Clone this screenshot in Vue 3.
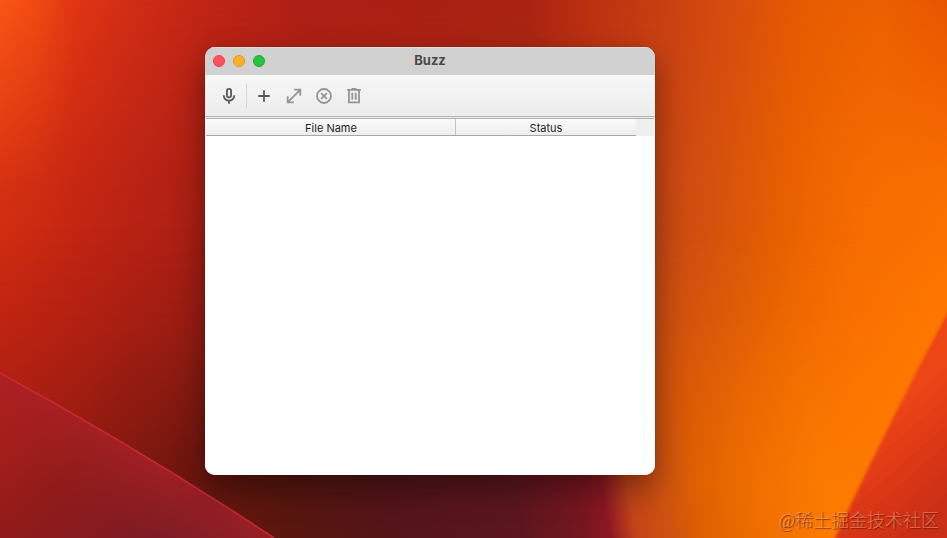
<script setup>
import { ref } from 'vue'

const columns = ref(['File Name', 'Status'])

const windowControls = [
  { name: 'close', label: 'Close' },
  { name: 'minimize', label: 'Minimize' },
  { name: 'zoom', label: 'Zoom' }
]
</script>

<template>
  <main class="desktop">
    <svg class="wallpaper" viewBox="0 0 947 538" preserveAspectRatio="none" aria-hidden="true">
      <defs>
        <linearGradient id="top-band" gradientUnits="userSpaceOnUse" x1="0" y1="0" x2="947" y2="0">
          <stop offset="0" stop-color="#fa5616" />
          <stop offset="0.04" stop-color="#f04a13" />
          <stop offset="0.08" stop-color="#df3513" />
          <stop offset="0.14" stop-color="#d02d15" />
          <stop offset="0.22" stop-color="#bf2414" />
          <stop offset="0.32" stop-color="#ad1f15" />
          <stop offset="0.45" stop-color="#a82013" />
          <stop offset="0.56" stop-color="#a92312" />
          <stop offset="0.62" stop-color="#bb3010" />
          <stop offset="0.7" stop-color="#c73f12" />
          <stop offset="0.78" stop-color="#d84e0d" />
          <stop offset="0.85" stop-color="#e65b00" />
          <stop offset="0.93" stop-color="#eb6000" />
          <stop offset="1" stop-color="#e75500" />
        </linearGradient>
        <linearGradient id="middle-band">
          <stop offset="0" stop-color="#cb2711" />
          <stop offset="0.08" stop-color="#bf2312" />
          <stop offset="0.15" stop-color="#b22014" />
          <stop offset="0.22" stop-color="#a61e14" />
          <stop offset="0.6" stop-color="#b43414" />
          <stop offset="0.7" stop-color="#cb4a15" />
          <stop offset="0.77" stop-color="#d9570b" />
          <stop offset="0.83" stop-color="#e96300" />
          <stop offset="0.9" stop-color="#f86e00" />
          <stop offset="1" stop-color="#ff7700" />
        </linearGradient>
        <linearGradient id="bottom-band" gradientUnits="userSpaceOnUse" x1="0" y1="538" x2="921" y2="385">
          <stop offset="0" stop-color="#a01b12" />
          <stop offset="0.1" stop-color="#8c1911" />
          <stop offset="0.2" stop-color="#6d160e" />
          <stop offset="0.31" stop-color="#58160e" />
          <stop offset="0.42" stop-color="#541419" />
          <stop offset="0.55" stop-color="#5c161e" />
          <stop offset="0.62" stop-color="#77161f" />
          <stop offset="0.645" stop-color="#8d1722" />
          <stop offset="0.672" stop-color="#c24319" />
          <stop offset="0.71" stop-color="#cf5310" />
          <stop offset="0.75" stop-color="#e06200" />
          <stop offset="0.81" stop-color="#f07000" />
          <stop offset="0.88" stop-color="#fb7a00" />
          <stop offset="1" stop-color="#ff7c00" />
        </linearGradient>
        <linearGradient id="fade-top" x2="0" y2="1">
          <stop offset="0" stop-color="#fff" />
          <stop offset="0.15" stop-color="#fff" stop-opacity="0.68" />
          <stop offset="0.35" stop-color="#fff" stop-opacity="0.22" />
          <stop offset="0.6" stop-color="#fff" stop-opacity="0" />
        </linearGradient>
        <linearGradient id="fade-bottom" x2="0" y2="1">
          <stop offset="0.42" stop-color="#fff" stop-opacity="0" />
          <stop offset="0.6" stop-color="#fff" stop-opacity="0.22" />
          <stop offset="0.8" stop-color="#fff" stop-opacity="0.75" />
          <stop offset="0.9" stop-color="#fff" />
        </linearGradient>
        <mask id="mask-top"><rect width="947" height="538" fill="url(#fade-top)" /></mask>
        <mask id="mask-bottom"><rect width="947" height="538" fill="url(#fade-bottom)" /></mask>
        <linearGradient id="left-fold" gradientUnits="userSpaceOnUse" x1="0" y1="380" x2="150" y2="550">
          <stop offset="0" stop-color="#b5201b" />
          <stop offset="0.5" stop-color="#921b19" />
          <stop offset="1" stop-color="#7c1b26" />
        </linearGradient>
        <linearGradient id="left-fold-light" gradientUnits="userSpaceOnUse" x1="130" y1="450" x2="95" y2="510">
          <stop offset="0" stop-color="#a82026" stop-opacity="0.7" />
          <stop offset="1" stop-color="#99201f" stop-opacity="0" />
        </linearGradient>
        <linearGradient id="right-fold" gradientUnits="userSpaceOnUse" x1="880" y1="420" x2="950" y2="500">
          <stop offset="0" stop-color="#ec4513" />
          <stop offset="0.5" stop-color="#dc3818" />
          <stop offset="1" stop-color="#c92e18" />
        </linearGradient>
        <filter id="soft"><feGaussianBlur stdDeviation="1.5" /></filter>
      </defs>
      <rect width="947" height="538" fill="url(#middle-band)" />
      <rect width="947" height="538" fill="url(#top-band)" mask="url(#mask-top)" />
      <rect width="947" height="538" fill="url(#bottom-band)" mask="url(#mask-bottom)" />
      <path d="M0 373Q145 452 274 538H0z" fill="url(#left-fold)" />
      <path d="M0 373Q145 452 274 538H0z" fill="url(#left-fold-light)" />
      <path d="M0 373Q145 452 274 538" fill="none" stroke="#cf2c35" stroke-width="1.8" opacity="0.8" />
      <path d="M960 290L947 314Q886 428 835 538L830 550H960z" fill="url(#right-fold)" filter="url(#soft)" />
    </svg>

    <section class="window" aria-labelledby="window-title">
      <header class="titlebar">
        <div class="controls">
          <button
            v-for="control in windowControls"
            :key="control.name"
            type="button"
            class="control"
            :class="control.name"
            :aria-label="control.label"
          ></button>
        </div>
        <h1 id="window-title" class="title">Buzz</h1>
      </header>

      <div class="toolbar" role="toolbar" aria-label="Transcription tools">
        <button type="button" class="tool" aria-label="Record">
          <svg class="icon" viewBox="0 0 20 20">
            <rect x="7.7" y="2" width="4.6" height="9.6" rx="2.3" />
            <path d="M4.2 9.3v.5a5.8 5.4 0 0 0 11.6 0v-.5M10 15.2v3.4" />
          </svg>
        </button>
        <span class="separator"></span>
        <button type="button" class="tool" aria-label="New transcription">
          <svg class="icon" viewBox="0 0 20 20"><path d="M10 3.6v12.8M3.6 10h12.8" /></svg>
        </button>
        <button type="button" class="tool" aria-label="Open transcript" disabled>
          <svg class="icon" viewBox="0 0 20 20">
            <path d="M3.4 16.6L16.6 3.4M10.2 3h6.8v6.8M3 10.2v6.8h6.8" />
          </svg>
        </button>
        <button type="button" class="tool" aria-label="Cancel transcription" disabled>
          <svg class="icon" viewBox="0 0 20 20">
            <circle cx="10" cy="10" r="7.8" />
            <path d="M6.8 6.8l6.4 6.4M13.2 6.8l-6.4 6.4" />
          </svg>
        </button>
        <button type="button" class="tool" aria-label="Clear history" disabled>
          <svg class="icon" viewBox="0 0 20 20">
            <path d="M2.4 3.3h15.2M7.3 2.2h5.4M4.4 3.6v13.4h11.2V3.6M8.1 6.3v8M11.9 6.3v8" />
          </svg>
        </button>
      </div>

      <div class="content">
        <table class="tasks">
          <thead>
            <tr>
              <th v-for="column in columns" :key="column" scope="col">{{ column }}</th>
              <td class="filler"></td>
            </tr>
          </thead>
        </table>
      </div>
    </section>

    <p class="watermark">@稀土掘金技术社区</p>
  </main>
</template>

<style>
body {
  margin: 0;
}
</style>

<style scoped>
.desktop {
  position: relative;
  display: grid;
  grid-template-columns: 205fr 450fr 292fr;
  grid-template-rows: 47fr 428fr 63fr;
  min-height: 100vh;
  overflow: hidden;
  font-family: Inter, 'Liberation Sans', sans-serif;
}

.wallpaper {
  position: absolute;
  inset: 0;
  width: 100%;
  height: 100%;
}

.window {
  position: relative;
  grid-area: 2 / 2;
  display: flex;
  flex-direction: column;
  overflow: hidden;
  border-radius: 10px;
  background: #fff;
  box-shadow: 0 0 1px rgba(0, 0, 0, 0.6), 0 14px 32px rgba(0, 0, 0, 0.4);
}

.titlebar {
  display: grid;
  grid-template-columns: 1fr auto 1fr;
  align-items: center;
  height: 28px;
  padding: 0 8px;
  background: #d1d1d1;
  box-shadow: inset 0 1px #dedede;
}

.controls {
  display: flex;
  gap: 8px;
}

.control {
  width: 12px;
  height: 12px;
  padding: 0;
  border: 1px solid;
  border-radius: 50%;
}

.close {
  border-color: #e5434a;
  background: #ff5259;
}

.minimize {
  border-color: #df9620;
  background: #fdb225;
}

.zoom {
  border-color: #1fa932;
  background: #25c43b;
}

.title {
  margin: 0;
  padding-bottom: 2px;
  color: #4a4a4a;
  font-size: 13px;
  font-weight: 700;
  line-height: 26px;
}

.toolbar {
  display: flex;
  align-items: center;
  height: 41px;
  padding: 0 9px;
  border-bottom: 1px solid #b4b4b4;
  background: linear-gradient(#f7f7f7, #ececec);
}

.tool {
  display: grid;
  place-items: center;
  width: 30px;
  height: 30px;
  padding: 0;
  border: 0;
  background: none;
  color: #585858;
}

.tool:disabled {
  color: #959595;
}

.icon {
  width: 18px;
  height: 18px;
  fill: none;
  stroke: currentColor;
  stroke-width: 2;
}

.separator {
  width: 1px;
  height: 24px;
  margin: 0 2px;
  background: #d6d6d6;
}

.content {
  flex: 1;
  padding: 1px 1px 0;
  background: linear-gradient(#ececec 1px, #fff 1px);
}

.tasks {
  width: 100%;
  border-collapse: separate;
  border-spacing: 0;
  border-top: 1px solid #b0b0b0;
  table-layout: fixed;
}

.tasks th {
  box-sizing: border-box;
  width: 180px;
  height: 17px;
  padding: 2px 0 0;
  border-bottom: 1px solid #a8a8a8;
  background: linear-gradient(#fbfbfb, #ededed);
  color: #1e1e1e;
  font-size: 11px;
  font-weight: 400;
  line-height: 14px;
  text-align: center;
}

.tasks th:first-child {
  width: 250px;
  box-shadow: inset -1px 0 #c4c4c4;
}

.tasks .filler {
  padding: 0;
  background: #efefef;
}

.watermark {
  position: absolute;
  right: 8px;
  bottom: 5px;
  margin: 0;
  color: rgba(255, 180, 140, 0.55);
  font-family: 'Liberation Serif', 'Noto Sans CJK SC', serif;
  font-size: 18px;
  font-weight: 300;
  line-height: 24px;
  text-shadow: 1px 1px 1px rgba(90, 20, 0, 0.7);
}
</style>
